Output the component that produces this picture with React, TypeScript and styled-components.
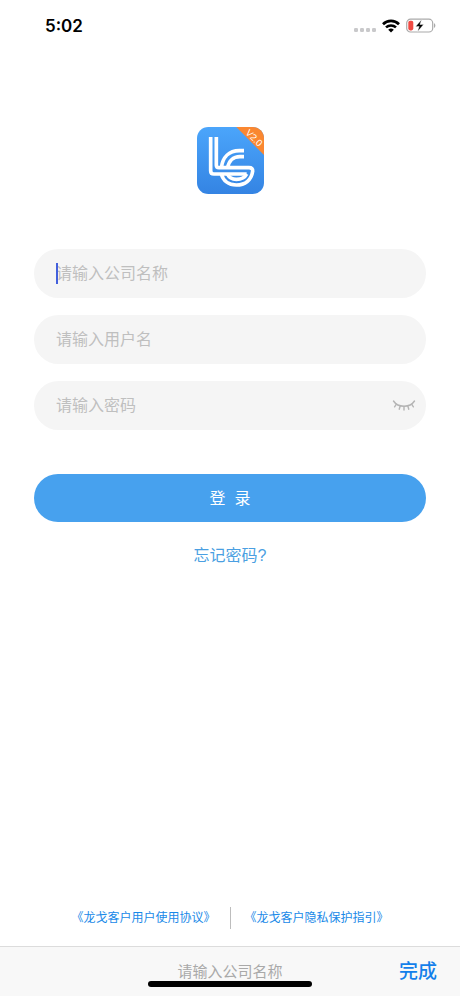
import React, { useState } from "react";
import styled, { createGlobalStyle } from "styled-components";

const GlobalStyle = createGlobalStyle`
  *, *::before, *::after { box-sizing: border-box; }
  body {
    margin: 0;
    background: #fff;
    font-family: "Liberation Sans", "Noto Sans CJK SC", sans-serif;
  }
  button, input { font-family: inherit; }
`;

const Screen = styled.div`
  min-height: 100vh;
  display: flex;
  flex-direction: column;
  background: #fff;
`;

const StatusBar = styled.header`
  display: flex;
  align-items: center;
  justify-content: space-between;
  height: 52px;
  padding: 0 24px 0 45px;
`;

const Clock = styled.time`
  font-family: Inter, sans-serif;
  font-size: 17px;
  font-weight: 600;
  color: #000;
`;

const StatusIcons = styled.div`
  display: flex;
  align-items: center;
  gap: 6px;
`;

const Main = styled.main`
  flex: 1;
  display: flex;
  flex-direction: column;
  align-items: center;
  padding: 75px 34px 0;
`;

const Form = styled.form`
  width: 100%;
  margin-top: 55px;
  display: flex;
  flex-direction: column;
  gap: 17px;
`;

const Field = styled.label`
  display: flex;
  align-items: center;
  height: 49px;
  padding: 0 10px 0 22px;
  border-radius: 25px;
  background: #f5f5f5;
`;

const Caret = styled.span`
  z-index: 1;
  width: 2px;
  height: 21px;
  margin-right: -2px;
  background: #4360dc;
`;

const TextInput = styled.input`
  flex: 1;
  min-width: 0;
  padding: 0;
  border: 0;
  outline: 0;
  background: transparent;
  font-size: 16px;
  line-height: 24px;
  color: #333;
  &::placeholder { color: #bfbfbf; opacity: 1; }
`;

const IconButton = styled.button`
  display: flex;
  padding: 0;
  border: 0;
  background: none;
`;

const SubmitButton = styled.button`
  height: 48px;
  margin-top: 27px;
  padding: 0 0 2px;
  border: 0;
  border-radius: 24px;
  background: #47a1ee;
  color: #fff;
  font-size: 16px;
  white-space: pre;
`;

const ForgotLink = styled.a`
  margin-top: 22px;
  font-size: 16px;
  line-height: 24px;
  color: #4a9fe2;
  text-decoration: none;
`;

const Agreements = styled.footer`
  display: flex;
  align-items: center;
  justify-content: center;
  gap: 14px;
  padding-bottom: 17px;
`;

const AgreementLink = styled.a`
  font-size: 12px;
  line-height: 20px;
  color: #1989e8;
  text-decoration: none;
`;

const Divider = styled.span`
  width: 1px;
  height: 22px;
  background: #bdbdbd;
`;

const AccessoryBar = styled.div`
  position: relative;
  display: grid;
  grid-template-columns: 1fr auto 1fr;
  align-items: center;
  height: 50px;
  padding: 0 23px;
  border-top: 1px solid #dcdcdc;
  background: #f8f8f8;
`;

const AccessoryTitle = styled.span`
  grid-column: 2;
  font-size: 15px;
  line-height: 22px;
  color: #a9a9a9;
`;

const DoneButton = styled.button`
  justify-self: end;
  padding: 0;
  border: 0;
  background: none;
  font-size: 19px;
  line-height: 28px;
  font-weight: 500;
  color: #147fea;
`;

const HomeIndicator = styled.span`
  position: absolute;
  bottom: 9px;
  left: 50%;
  width: 164px;
  height: 6px;
  margin-left: -82px;
  border-radius: 3px;
  background: #000;
`;

const SignalIcon = () => (
  <svg width="22" height="18" viewBox="0 0 22 18" fill="#c9c9cb" aria-hidden="true">
    <rect x="0" y="11" width="4" height="4" rx="1.3" />
    <rect x="6" y="11" width="4" height="4" rx="1.3" />
    <rect x="12" y="11" width="4" height="4" rx="1.3" />
    <rect x="18" y="11" width="4" height="4" rx="1.3" />
  </svg>
);

const WifiIcon = () => (
  <svg width="18" height="14" viewBox="0 0 18 14" fill="none" stroke="#000" aria-hidden="true">
    <path d="M1 5.2a11.5 11.5 0 0 1 16 0" strokeWidth="2.7" />
    <path d="M4 8.4a7.2 7.2 0 0 1 10 0" strokeWidth="2.5" />
    <path d="M9 13.6 6.2 10.8a4 4 0 0 1 5.6 0Z" fill="#000" stroke="none" />
  </svg>
);

const BatteryIcon = () => (
  <svg width="30" height="16" viewBox="0 0 30 16" aria-hidden="true">
    <rect x="0.7" y="1.2" width="26" height="12.8" rx="3.8" fill="#fff" stroke="#aaa" strokeWidth="1.2" />
    <rect x="2.3" y="2.8" width="5" height="9.6" rx="1.8" fill="#f04a43" />
    <path d="M28 5.3c1.8.7 1.8 3.9 0 4.6Z" fill="#aaa" />
    <path d="M15.6 1.8 9.6 8.4h3.6l-1.6 5.2 6-7.1h-3.7Z" fill="#000" stroke="#fff" strokeWidth="0.4" />
  </svg>
);

const Logo = () => (
  <svg width="67" height="67" viewBox="0 0 201 201" role="img" aria-label="V2.0">
    <defs>
      <linearGradient id="logoFill" x1="0" y1="0" x2="0" y2="1">
        <stop offset="0" stopColor="#4ba5fb" />
        <stop offset="1" stopColor="#3484e3" />
      </linearGradient>
      <clipPath id="logoClip">
        <rect width="201" height="201" rx="34" />
      </clipPath>
    </defs>
    <g clipPath="url(#logoClip)">
      <rect width="201" height="201" fill="url(#logoFill)" />
      <path d="M118 0H201V84Z" fill="#fa8731" />
      <g fill="none" stroke="#fff" strokeWidth="11">
        <path d="M41 30V131Q41 141 51 141H149" />
        <path d="M58 30V115Q58 122 66 122H156Q168 122 167 133C163 160 144 174 118 174C94 174 78 160 73 141" />
        <path d="M141 71H127C96 71 77 91 73 122" />
        <path d="M141 89H129C108 89 95 103 92 122" />
        <path d="M91 141C96 151 105 157 118 157C133 157 144 151 149 141" />
      </g>
      <text
        transform="translate(144 19) rotate(45)"
        fontFamily="Liberation Sans, sans-serif"
        fontSize="28"
        fill="#fff"
      >
        V2.0
      </text>
    </g>
  </svg>
);

const ClosedEyeIcon = () => (
  <svg width="24" height="14" viewBox="0 0 24 14" fill="none" stroke="#b5b5b5" strokeWidth="1.4" strokeLinecap="round" aria-hidden="true">
    <path d="M1.5 2C6 9 18 9 22.5 2" />
    <path d="M4.4 5.2 2.6 7.8M8.2 7 7.2 10.2M12 7.4V11M15.8 7l1 3.2M19.6 5.2l1.8 2.6" />
  </svg>
);

export default function App() {
  const [company, setCompany] = useState("");
  const [visible, setVisible] = useState(false);

  return (
    <>
      <GlobalStyle />
      <Screen>
        <StatusBar>
          <Clock>5:02</Clock>
          <StatusIcons>
            <SignalIcon />
            <WifiIcon />
            <BatteryIcon />
          </StatusIcons>
        </StatusBar>
        <Main>
          <Logo />
          <Form onSubmit={(event) => event.preventDefault()}>
            <Field>
              {company === "" && <Caret />}
              <TextInput
                aria-label="公司名称"
                placeholder="请输入公司名称"
                value={company}
                onChange={(event) => setCompany(event.target.value)}
              />
            </Field>
            <Field>
              <TextInput aria-label="用户名" placeholder="请输入用户名" />
            </Field>
            <Field>
              <TextInput aria-label="密码" type={visible ? "text" : "password"} placeholder="请输入密码" />
              <IconButton type="button" aria-label="显示密码" onClick={() => setVisible(!visible)}>
                <ClosedEyeIcon />
              </IconButton>
            </Field>
            <SubmitButton type="submit">登  录</SubmitButton>
          </Form>
          <ForgotLink href="#forgot">忘记密码?</ForgotLink>
        </Main>
        <Agreements>
          <AgreementLink href="#terms">《龙戈客户用户使用协议》</AgreementLink>
          <Divider />
          <AgreementLink href="#privacy">《龙戈客户隐私保护指引》</AgreementLink>
        </Agreements>
        <AccessoryBar>
          <AccessoryTitle>请输入公司名称</AccessoryTitle>
          <DoneButton type="button">完成</DoneButton>
          <HomeIndicator />
        </AccessoryBar>
      </Screen>
    </>
  );
}
